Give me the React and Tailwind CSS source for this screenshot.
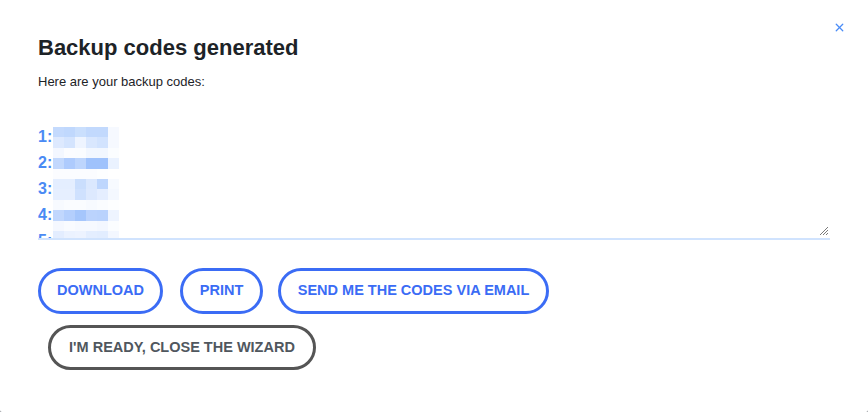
import { X } from 'lucide-react'

const mosaic = [
  ['#c4dafd', '#c0d8fd', '#cadffd', '#c2d9fd', '#c2d9fd', '#f6f9ff'],
  ['#dde9fe', '#d4e4fe', '#eef4ff', '#d9e7fe', '#d2e3fe', '#f6f9ff'],
  ['#f3f7ff', '#fbfcff', '#fafcff', '#f2f7ff', '#f2f7ff', '#fbfdff'],
  ['#c2d8fd', '#aecbfd', '#bdd5fd', '#9fc2fc', '#9fc2fc', '#eaf2ff'],
  ['#fbfcff', '#fbfcff', '#fbfcff', '#fbfcff', '#fdfeff', '#ffffff'],
  ['#e4eeff', '#e4eeff', '#cadefd', '#dbe8fe', '#bed6fd', '#f7faff'],
  ['#e6efff', '#e6efff', '#cfe1fe', '#dde9fe', '#e5eeff', '#f4f8ff'],
  ['#f7faff', '#fafcff', '#fafcff', '#f7faff', '#fafcff', '#fdfeff'],
  ['#c1d7fd', '#b4cffd', '#a5c6fc', '#bbd3fd', '#b9d2fd', '#eef4ff'],
  ['#f5f8ff', '#f9fbff', '#f6f9ff', '#f6f9ff', '#f3f7ff', '#fbfdff'],
  ['#e3edff', '#ebf2ff', '#edf3ff', '#e4eeff', '#e2edff', '#f3f7ff'],
]

function BlueButton({ children, className = '' }) {
  return (
    <button className={`h-[46px] rounded-full border-[3px] border-[#3b6cf5] text-[#3b6cf5] text-[14.5px] font-bold bg-white ${className}`}>
      {children}
    </button>
  )
}

export default function App() {
  return (
    <div className="w-[868px] h-[412px] bg-[#8c8f94]" style={{ fontFamily: '"Liberation Sans", Arial, sans-serif' }}>
      <div className="relative w-full h-full bg-white rounded-b-[2px] px-[38px] pt-[33px]">
        <button className="absolute right-[22px] top-[21px] text-[#4a8cf7]">
          <X size={13} strokeWidth={2.4} />
        </button>

        <h1 className="text-[22px] leading-[30px] font-bold text-[#1d2327]">Backup codes generated</h1>
        <p className="mt-[10px] text-[13px] leading-[18px] text-[#1d2327]">Here are your backup codes:</p>

        {/* codes box */}
        <div className="relative mt-[21px] w-[792px] h-[128px] overflow-hidden border-b-2 border-[#d0e3fe]">
          <div className="pt-[12px] text-[16px] leading-[26px] font-bold text-[#4a8af4]">
            {[1, 2, 3, 4, 5].map((n) => (
              <div key={n}>{n}:</div>
            ))}
          </div>
          <div className="absolute left-[15px] top-[15px] flex flex-col">
            {mosaic.map((row, i) => (
              <div key={i} className="flex h-[10.4px]">
                {row.map((c, j) => (
                  <div key={j} className="w-[11px] h-full" style={{ backgroundColor: c }} />
                ))}
              </div>
            ))}
          </div>
          <svg className="absolute right-[1px] bottom-[2px]" width="10" height="10" viewBox="0 0 10 10">
            <path d="M9 1 L1 9 M9 4 L4 9 M9 7 L7 9" stroke="#7a7a7a" strokeWidth="1" />
          </svg>
        </div>

        {/* actions */}
        <div className="mt-[28px] flex items-center">
          <BlueButton className="w-[125px]">DOWNLOAD</BlueButton>
          <BlueButton className="ml-[17px] w-[83px]">PRINT</BlueButton>
          <BlueButton className="ml-[15px] w-[271px]">SEND ME THE CODES VIA EMAIL</BlueButton>
        </div>
        <div className="mt-[11px] ml-[10px]">
          <button className="h-[45px] w-[268px] rounded-full border-[3px] border-[#555555] text-[#50575e] text-[14.5px] font-bold bg-white">
            I'M READY, CLOSE THE WIZARD
          </button>
        </div>
      </div>
    </div>
  )
}
